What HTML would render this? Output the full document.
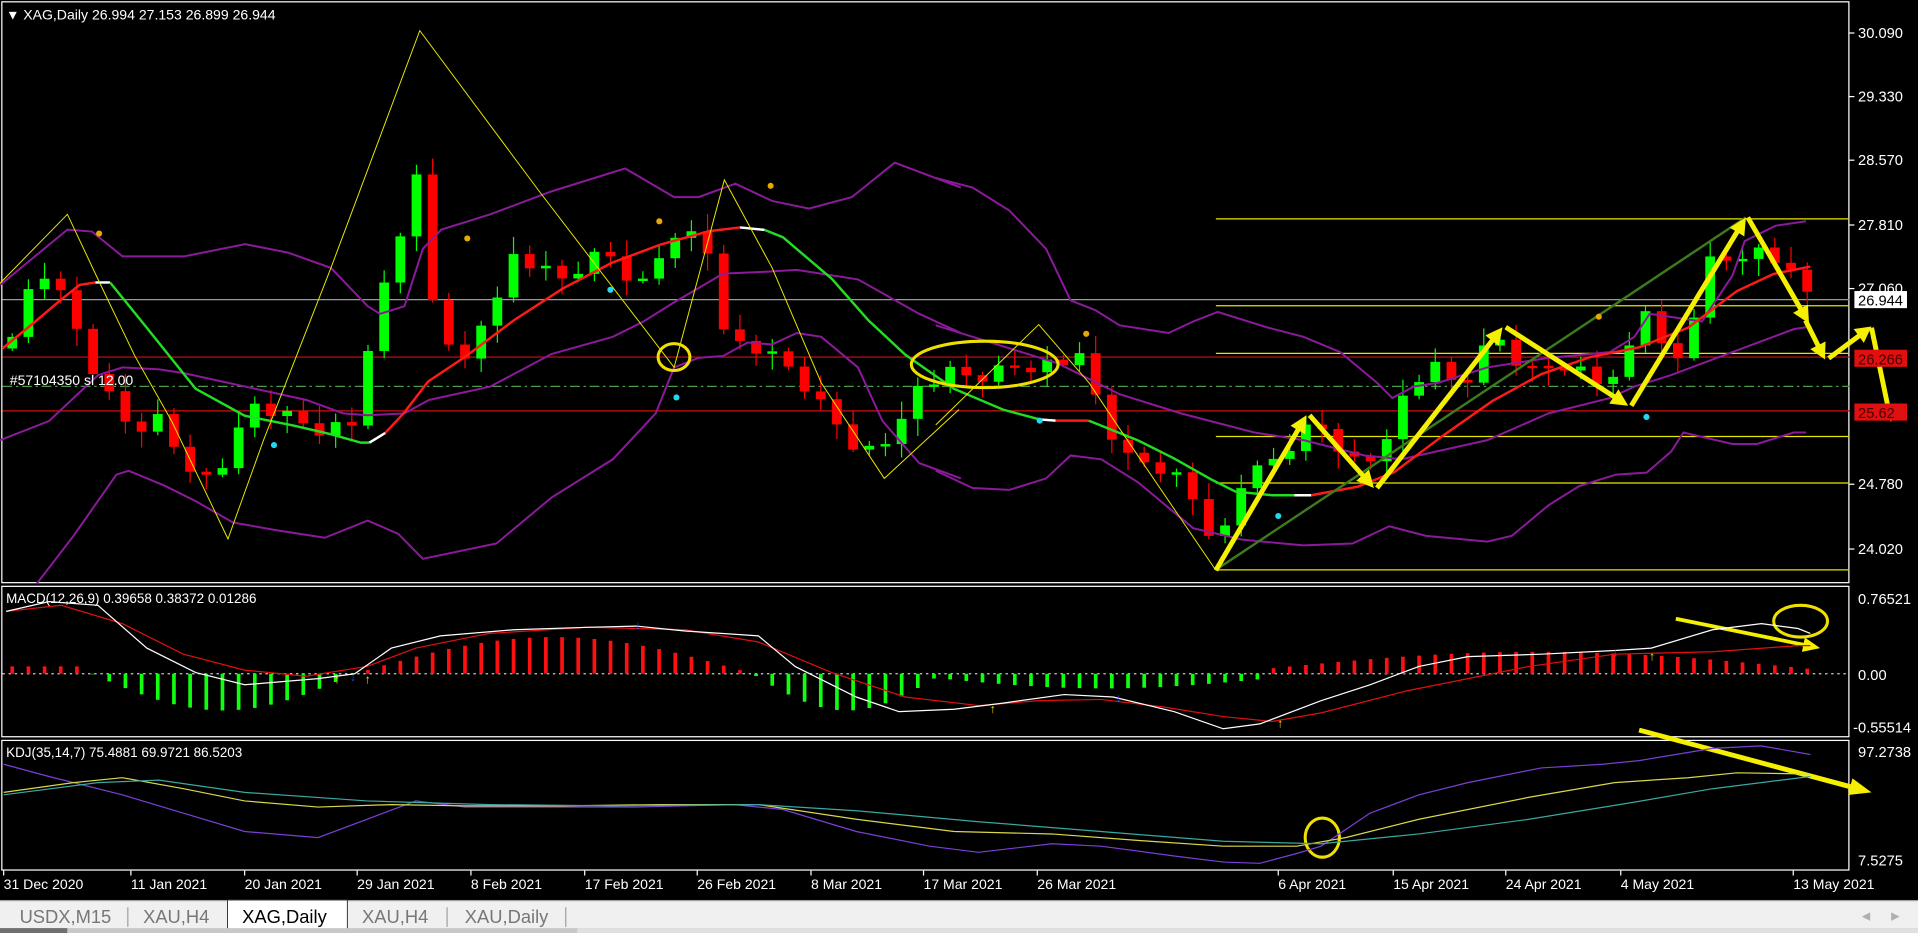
<!DOCTYPE html>
<html><head><meta charset="utf-8"><style>
html,body{margin:0;padding:0;background:#000;width:1918px;height:933px;overflow:hidden}
svg{display:block}
text{font-family:"Liberation Sans",sans-serif}
</style></head><body>
<svg id="s" width="1918" height="933" viewBox="0 0 1568 763" preserveAspectRatio="none" xmlns="http://www.w3.org/2000/svg">
<rect width="1568" height="763" fill="#000"/>
<rect x="1.5" y="1.5" width="1510" height="475" fill="none" stroke="#fff" stroke-width="1"/>
<rect x="1.5" y="479.5" width="1510" height="123" fill="none" stroke="#fff" stroke-width="1"/>
<rect x="1.5" y="605.5" width="1510" height="106" fill="none" stroke="#fff" stroke-width="1"/>
<line x1="2" x2="1512" y1="245" y2="245" stroke="#9a9a9a"/>
<line x1="2" x2="1512" y1="292" y2="292" stroke="#d01010"/>
<line x1="2" x2="1512" y1="336" y2="336" stroke="#d01010"/>
<line x1="2" x2="1512" y1="316" y2="316" stroke="#4a9a4a" stroke-dasharray="8,3,2,3"/>
<g stroke="#e6e600" stroke-width="1">
<line x1="994" x2="1512" y1="179" y2="179"/><line x1="994" x2="1512" y1="250" y2="250"/>
<line x1="994" x2="1512" y1="289" y2="289"/><line x1="994" x2="1512" y1="357" y2="357"/>
<line x1="994" x2="1512" y1="395" y2="395"/><line x1="994" x2="1512" y1="466" y2="466"/>
</g>
<g id="cnd"></g>
<g fill="none" stroke="#8b1a9b" stroke-width="2">
<g transform="scale(0.501,0.313)">
<polyline vector-effect="non-scaling-stroke" points="0,745 110,600 150,605 200,670 300,670 400,638 470,660 540,700 600,800 620,820 660,800 690,650 720,600 800,560 900,500 1020,440 1100,515 1140,515 1200,480 1260,525 1320,545 1390,515 1460,425 1568,490"/>
<polyline vector-effect="non-scaling-stroke" points="0,1150 80,1100 160,980 200,960 260,965 300,975 400,1010 500,1045 560,1080 600,1085 660,1080 700,1045 800,1010 900,925 1000,880 1050,840 1100,790 1180,715 1250,710 1300,705 1400,730 1500,820 1568,870"/>
<polyline vector-effect="non-scaling-stroke" points="60,1525 120,1400 190,1240 210,1230 270,1270 320,1310 380,1365 450,1385 530,1405 600,1360 650,1395 690,1460 810,1420 900,1300 1000,1200 1070,1080 1100,960 1140,935 1180,930 1220,895 1260,900 1300,870 1340,880 1400,960 1440,1100 1500,1210 1568,1250"/>
</g>
<g transform="translate(765,0) scale(0.501,0.313)">
<polyline vector-effect="non-scaling-stroke" points="0,465 60,490 120,550 180,650 220,785 260,810 300,850 380,870 420,840 460,815 540,855 600,880 660,920 720,1000 745,1040 780,1010 820,1000 900,960 1000,935 1100,920 1140,880 1165,820 1250,840 1300,720 1320,630 1370,590 1420,578"/>
<polyline vector-effect="non-scaling-stroke" points="0,850 100,900 200,950 300,1030 400,1080 520,1130 600,1150 700,1190 760,1200 900,1150 1000,1080 1100,1040 1140,1010 1200,980 1300,920 1400,860 1420,855"/>
<polyline vector-effect="non-scaling-stroke" points="0,1230 60,1275 120,1280 180,1250 220,1190 270,1200 330,1260 420,1380 500,1410 600,1425 680,1420 740,1375 800,1400 900,1415 940,1400 1000,1320 1050,1270 1110,1240 1160,1235 1200,1180 1220,1130 1300,1160 1340,1160 1400,1130 1420,1130"/>
</g>
</g>
<g fill="none" stroke-width="2">
<polyline stroke="#ff1a1a" points="2,285 30,262 50,245 65,233 78,231"/>
<polyline stroke="#fff" points="78,231 90,231"/>
<polyline stroke="#22dd22" points="90,231 120,268 160,318 200,340 240,348 270,355 295,362 302,362"/>
<polyline stroke="#fff" points="302,362 315,354"/>
<polyline stroke="#ff1a1a" points="315,354 330,338 350,312 380,292 420,262 460,236 500,215 540,200 580,189 605,186"/>
<polyline stroke="#fff" points="605,186 625,188"/>
<polyline stroke="#22dd22" points="625,188 640,194 680,228 710,262 740,290 780,318 820,335 850,343"/>
<polyline stroke="#fff" points="850,343 863,344"/>
<polyline stroke="#ff1a1a" points="863,344 890,344"/>
<polyline stroke="#22dd22" points="890,344 900,348 930,360 960,375 990,392 1010,402 1040,405 1058,405"/>
<polyline stroke="#fff" points="1058,405 1072,405"/>
<polyline stroke="#ff1a1a" points="1072,405 1110,398 1140,386 1180,356 1220,328 1260,306 1300,292 1340,284 1380,268 1420,238 1450,224 1480,218"/>
</g>
<g fill="none" stroke="#e6e600" stroke-width="1">
<polyline transform="scale(0.501,0.313)" vector-effect="non-scaling-stroke" points="0,740 110,560 160,730 220,930 280,1100 372,1408 430,1150 540,700 685,80 880,500 1100,960 1182,470 1260,700 1340,1000 1443,1250 1565,1070"/>
<polyline transform="translate(765,0) scale(0.501,0.313)" vector-effect="non-scaling-stroke" points="0,1110 168,848 250,1000 300,1120 457,1490"/>
</g>
<line x1="994" y1="466" x2="1427" y2="178" stroke="#3d7a1e" stroke-width="2"/>
<g fill="#e8a800"><circle cx="81" cy="191" r="2.5"/><circle cx="382" cy="195" r="2.5"/><circle cx="539" cy="181" r="2.5"/><circle cx="630" cy="152" r="2.5"/><circle cx="888" cy="273" r="2.5"/><circle cx="1307" cy="259" r="2.5"/></g>
<g fill="#22d8f0"><circle cx="224" cy="364" r="2.5"/><circle cx="499" cy="237" r="2.5"/><circle cx="553" cy="325" r="2.5"/><circle cx="850" cy="344" r="2.5"/><circle cx="1045" cy="422" r="2.5"/><circle cx="1346" cy="341" r="2.5"/></g>
<g fill="none" stroke="#f0e000" stroke-width="2.5">
<ellipse cx="551" cy="292" rx="13" ry="11"/>
<ellipse cx="805" cy="298" rx="60" ry="19"/>
<ellipse cx="1472" cy="508" rx="22" ry="13"/>
<ellipse cx="1081" cy="685" rx="14" ry="16"/>
</g>
<g id="arr" fill="#f5f000"></g>
<text x="5" y="16" fill="#fff" font-size="11">▼</text>
<text x="19" y="16" fill="#fff" font-size="11.5">XAG,Daily  26.994 27.153 26.899 26.944</text>
<text x="8" y="315" fill="#fff" font-size="11.5">#57104350 sl 12.00</text>
<g fill="#fff" font-size="12">
<text x="1519" y="31">30.090</text><text x="1519" y="83">29.330</text><text x="1519" y="135">28.570</text>
<text x="1519" y="188">27.810</text><text x="1519" y="240">27.060</text><text x="1519" y="400">24.780</text>
<text x="1519" y="453">24.020</text>
</g>
<g stroke="#fff"><line x1="1512" x2="1516" y1="27" y2="27"/><line x1="1512" x2="1516" y1="79" y2="79"/><line x1="1512" x2="1516" y1="131" y2="131"/><line x1="1512" x2="1516" y1="184" y2="184"/><line x1="1512" x2="1516" y1="236" y2="236"/><line x1="1512" x2="1516" y1="396" y2="396"/><line x1="1512" x2="1516" y1="449" y2="449"/></g>
<rect x="1516" y="238" width="43" height="14" fill="#fff"/><text x="1519" y="250" fill="#000" font-size="12">26.944</text>
<rect x="1516" y="286" width="43" height="14" fill="#e01010"/><text x="1519" y="298" fill="#400" font-size="12">26.266</text>
<rect x="1516" y="330" width="43" height="14" fill="#e01010"/><text x="1519" y="342" fill="#400" font-size="12">25.62</text>
<text x="5" y="493" fill="#fff" font-size="11">MACD(12,26,9) 0.39658 0.38372 0.01286</text>
<line x1="2" x2="1512" y1="551" y2="551" stroke="#ccc" stroke-dasharray="2,3"/>
<g id="hist"></g>
<polyline fill="none" stroke="#e01010" stroke-width="1" points="5,500 50,495 100,510 150,535 200,548 250,553 300,545 340,530 400,518 480,513 560,515 620,525 680,550 740,570 800,577 850,573 900,572 950,578 1000,586 1040,590 1080,583 1150,565 1250,545 1320,535 1400,533 1470,528 1480,528"/>
<polyline fill="none" stroke="#fff" stroke-width="1" points="5,500 40,492 80,495 120,530 160,550 200,560 260,555 290,551 320,530 360,520 420,515 480,513 520,512 560,516 620,520 650,545 700,570 735,582 780,580 820,575 870,568 910,570 960,582 1000,596 1030,592 1080,573 1120,560 1160,545 1200,537 1260,535 1320,532 1350,530 1400,515 1440,510 1470,514 1480,518"/>
<g fill="#f0e000" font-size="10"><text x="273" y="559">↑</text><text x="298" y="559">↑</text><text x="809" y="583">↑</text><text x="1044" y="595">↑</text><text x="1348" y="540">↑</text></g>
<g fill="#3050ff" font-size="10"><text x="286" y="557">↓</text><text x="519" y="515">↓</text><text x="912" y="574">↓</text><text x="1318" y="537">↓</text></g>
<g fill="#fff" font-size="12"><text x="1519" y="494">0.76521</text><text x="1519" y="556">0.00</text><text x="1515" y="599">-0.55514</text></g>
<text x="5" y="619" fill="#fff" font-size="11">KDJ(35,14,7) 75.4881 69.9721 86.5203</text>
<polyline fill="none" stroke="#7b3fd6" points="3,625 40,635 100,650 150,665 200,680 260,685 300,670 340,655 380,660 450,660 520,660 600,658 640,662 700,680 760,692 800,697 860,690 900,692 960,700 1000,705 1030,706 1060,698 1080,692 1120,665 1160,650 1200,640 1260,628 1310,625 1340,622 1400,612 1440,610 1480,617"/>
<polyline fill="none" stroke="#d8d84a" points="3,648 60,640 100,636 150,645 200,655 260,660 320,658 380,659 460,659 540,658 620,658 700,670 780,680 860,682 940,688 1000,692 1060,692 1100,685 1160,670 1250,652 1320,640 1380,636 1420,632 1480,633"/>
<polyline fill="none" stroke="#3aa8a0" points="3,650 80,640 130,638 200,648 300,655 400,658 500,659 620,658 700,663 800,672 900,680 1000,688 1080,690 1160,682 1250,670 1330,657 1400,645 1480,635"/>
<g fill="#fff" font-size="12"><text x="1519" y="619">97.2738</text><text x="1519" y="708">7.5275</text></g>
<g fill="#fff" font-size="11.5">
<text x="3" y="727">31 Dec 2020</text><text x="107" y="727">11 Jan 2021</text><text x="200" y="727">20 Jan 2021</text><text x="292" y="727">29 Jan 2021</text><text x="385" y="727">8 Feb 2021</text><text x="478" y="727">17 Feb 2021</text><text x="570" y="727">26 Feb 2021</text><text x="663" y="727">8 Mar 2021</text><text x="755" y="727">17 Mar 2021</text><text x="848" y="727">26 Mar 2021</text><text x="1045" y="727">6 Apr 2021</text><text x="1139" y="727">15 Apr 2021</text><text x="1231" y="727">24 Apr 2021</text><text x="1325" y="727">4 May 2021</text><text x="1466" y="727">13 May 2021</text>
</g>
<g stroke="#fff"><line x1="3" x2="3" y1="712" y2="716"/><line x1="107" x2="107" y1="712" y2="716"/><line x1="200" x2="200" y1="712" y2="716"/><line x1="292" x2="292" y1="712" y2="716"/><line x1="385" x2="385" y1="712" y2="716"/><line x1="478" x2="478" y1="712" y2="716"/><line x1="570" x2="570" y1="712" y2="716"/><line x1="663" x2="663" y1="712" y2="716"/><line x1="755" x2="755" y1="712" y2="716"/><line x1="848" x2="848" y1="712" y2="716"/><line x1="1045" x2="1045" y1="712" y2="716"/><line x1="1139" x2="1139" y1="712" y2="716"/><line x1="1231" x2="1231" y1="712" y2="716"/><line x1="1325" x2="1325" y1="712" y2="716"/><line x1="1466" x2="1466" y1="712" y2="716"/></g>
<rect x="0" y="736" width="1568" height="27" fill="#f0f0f0"/>
<rect x="0" y="736" width="1568" height="1" fill="#a0a0a0"/>
<rect x="186" y="736" width="98" height="25" fill="#fff" stroke="#333" stroke-width="0.8"/>
<g fill="#a0a0a0"><rect x="104" y="742" width="1" height="16"/><rect x="365" y="742" width="1" height="16"/><rect x="462" y="742" width="1" height="16"/></g>
<rect x="0" y="759" width="1568" height="4" fill="#c8c8c8"/>
<rect x="0" y="759" width="55" height="4" fill="#707070"/>
<rect x="472" y="759" width="1096" height="4" fill="#e0e0e0"/>
<g font-size="15" fill="#777"><text x="16" y="755">USDX,M15</text><text x="117" y="755">XAU,H4</text><text x="296" y="755">XAU,H4</text><text x="380" y="755">XAU,Daily</text></g>
<text x="198" y="755" font-size="15" fill="#000">XAG,Daily</text>
<g fill="#b0b0b0" font-size="9"><text x="1522" y="752">◀</text><text x="1546" y="752">▶</text></g>
</svg>
<script>
(function(){
var NS="http://www.w3.org/2000/svg";
function el(t,a,p){var e=document.createElementNS(NS,t);for(var k in a)e.setAttribute(k,a[k]);p.appendChild(e);return e;}
var kp=[[10,282],[30,215],[55,250],[80,310],[107,350],[132,340],[158,398],[183,378],[208,330],[262,350],[290,345],[302,288],[315,228],[343,140],[355,258],[382,300],[395,260],[420,210],[458,230],[495,205],[523,236],[552,188],[577,195],[589,275],[614,283],[645,300],[705,370],[735,355],[748,318],[775,305],[800,308],[825,300],[850,297],[888,295],[900,340],[920,375],[945,380],[970,395],[985,430],[1000,438],[1010,400],[1035,382],[1060,360],[1075,345],[1090,360],[1115,385],[1130,360],[1150,320],[1170,300],[1195,318],[1210,290],[1230,275],[1245,305],[1265,300],[1285,295],[1300,310],[1320,315],[1345,250],[1360,290],[1380,295],[1390,212],[1405,215],[1425,205],[1440,205],[1455,215],[1468,232],[1480,242]];
function ip(x){for(var i=0;i<kp.length-1;i++){if(x<=kp[i+1][0]){var a=kp[i],b=kp[i+1];return a[1]+(b[1]-a[1])*(x-a[0])/(b[0]-a[0]);}}return kp[kp.length-1][1];}
var g=document.getElementById("cnd"),h=document.getElementById("hist");
var prev=285;
for(var i=0;i<112;i++){
 var x=10+i*13.22;var c=ip(x)+(((i*37)%11)-5)*1.3;var o=prev;prev=c;
 var up=c<o;var col=up?"#00ff00":"#ff0000";
 var t=Math.min(o,c),b=Math.max(o,c);if(b-t<2){b=t+2;}
 var wt=t-(3+(i*53)%12),wb=b+(2+(i*29)%13);
 el("line",{x1:x,x2:x,y1:wt,y2:wb,stroke:col,"stroke-width":1},g);
 el("rect",{x:x-4,y:t,width:8,height:b-t,fill:col},g);
 var v;
 if(x<75)v=6;else if(x<290)v=-Math.sin((x-75)/215*Math.PI)*30;
 else if(x<615)v=Math.sin((x-290)/325*Math.PI)*30;
 else if(x<770)v=-Math.sin((x-615)/155*Math.PI)*30;
 else if(x<1035)v=-(4+Math.sin((x-770)/265*Math.PI)*8);
 else v=4+Math.sin((x-1035)/445*Math.PI)*14;
 var hc=v>0?"#ff1010":"#10ff10";
 el("rect",{x:x-1.5,y:v>0?551-v:551,width:3,height:Math.abs(v),fill:hc},h);
}
var A=document.getElementById("arr");
function arrow(x1,y1,x2,y2,w,hw,hl){
 var dx=x2-x1,dy=y2-y1,L=Math.sqrt(dx*dx+dy*dy),ux=dx/L,uy=dy/L,nx=-uy,ny=ux;
 var bx=x2-ux*hl,by=y2-uy*hl;
 var p=[[x1+nx*w/2,y1+ny*w/2],[bx+nx*w/2,by+ny*w/2],[bx+nx*hw,by+ny*hw],[x2,y2],[bx-nx*hw,by-ny*hw],[bx-nx*w/2,by-ny*w/2],[x1-nx*w/2,y1-ny*w/2]];
 el("polygon",{points:p.map(function(q){return q[0].toFixed(1)+","+q[1].toFixed(1)}).join(" ")},A);
}
function z4(zx,zy){return [765+zx*0.501,zy*0.313];}
var segs=[[457,1490,605,1085],[610,1085,715,1275],[720,1275,925,855],[930,855,1130,1060],[1135,1060,1322,568],[1325,568,1425,845]];
segs.forEach(function(s){var a=z4(s[0],s[1]),b=z4(s[2],s[3]);arrow(a[0],a[1],b[0],b[1],4,7,14);});
arrow(1476,262,1492,294,4,7,13);
arrow(1495,293,1530,267,4,7,13);
arrow(1530,268,1546,345,4,7,14);
arrow(1370,506,1488,530,3,6,14);
arrow(1340,597,1530,648,4,7,18);
})();
</script>
</body></html>
